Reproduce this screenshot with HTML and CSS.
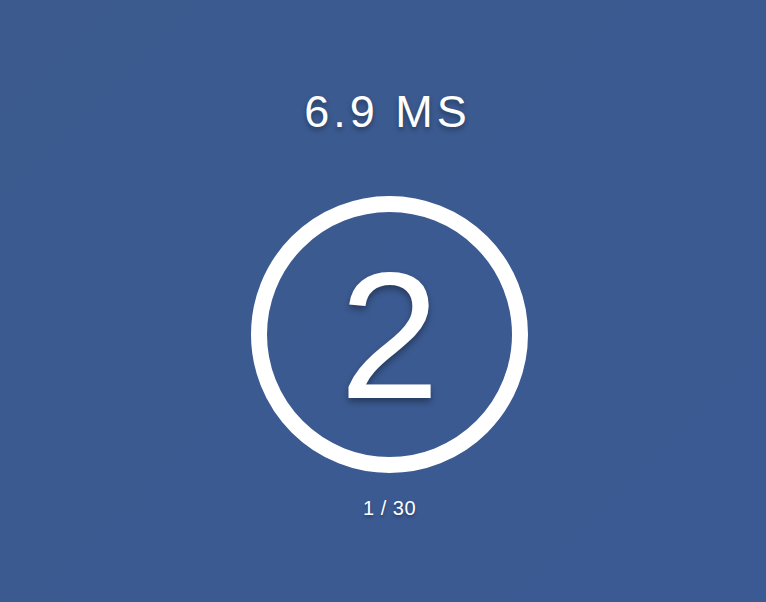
FILE: index.html
```html
<!DOCTYPE html>
<html>
<head>
<meta charset="utf-8">
<link rel="stylesheet" href="styles.css">
</head>
<body>
<main class="stage">
  <h1 class="timer">6.9 MS</h1>
  <div class="ring"><span class="digit">2</span></div>
  <p class="count">1 / 30</p>
</main>
</body>
</html>
```
FILE: styles.css
```css
html, body {
  margin: 0;
  height: 100%;
}
body {
  background: linear-gradient(135deg, #3c5a8e 0%, #3b5a91 50%, #3b5a94 100%);
  font-family: "Liberation Sans", Arial, sans-serif;
  color: #fff;
  overflow: hidden;
}
.stage {
  display: flex;
  flex-direction: column;
  align-items: center;
  padding-top: 84px;
  padding-left: 13px;
}
.timer {
  margin: 0;
  padding-right: 4px;
  font-size: 45px;
  font-weight: normal;
  letter-spacing: 4px;
  line-height: 56px;
  text-shadow: 0 3px 5px rgba(0, 0, 0, 0.35);
}
.ring {
  margin-top: 56px;
  width: 245px;
  height: 245px;
  border: 16px solid #fff;
  border-radius: 50%;
  display: flex;
  align-items: center;
  justify-content: center;
}
.digit {
  font-size: 180px;
  line-height: 1;
  margin-top: 2px;
  text-shadow: 0 4px 6px rgba(0, 0, 0, 0.35);
}
.count {
  margin: 24px 0 0;
  font-size: 20px;
  line-height: 22px;
  letter-spacing: 0.5px;
  text-shadow: 0 2px 3px rgba(0, 0, 0, 0.3);
}
```
